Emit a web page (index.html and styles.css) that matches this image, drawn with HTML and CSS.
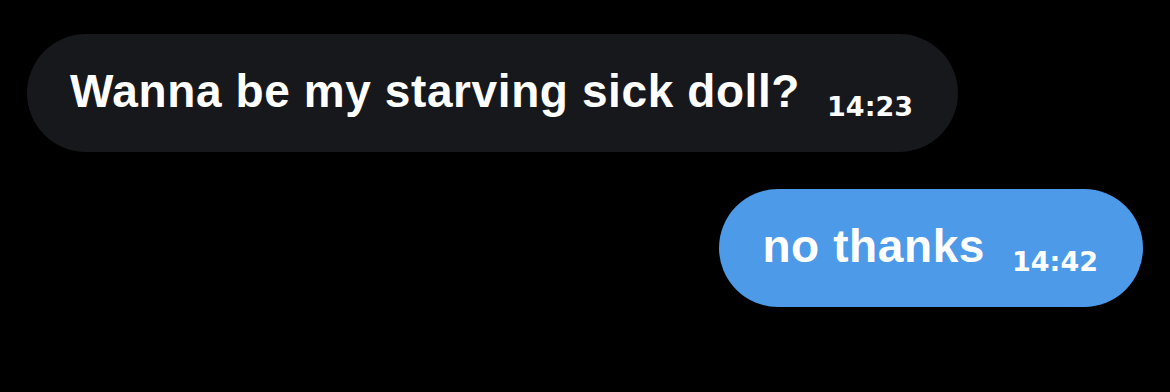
FILE: index.html
```html
<!DOCTYPE html>
<html lang="en">
<head>
    <meta charset="UTF-8">
    <meta name="viewport" content="width=device-width, initial-scale=1.0">
    <title>Messages</title>
    <link rel="stylesheet" href="styles.css">
</head>
<body>
    <div class="chat">
        <div class="row received">
            <div class="bubble"><span class="text">Wanna be my starving sick doll?</span><span class="time">14:23</span></div>
        </div>
        <div class="row sent">
            <div class="bubble"><span class="text">no thanks</span><span class="time">14:42</span></div>
        </div>
    </div>
</body>
</html>
```

FILE: styles.css
```css
body {
    margin: 0;
    background-color: #000;
    font-family: 'Liberation Sans', Arial, sans-serif;
    color: #fff;
}
.chat {
    display: flex;
    flex-direction: column;
    gap: 37px;
    padding: 34px 27px 0 27px;
}
.row {
    display: flex;
}
.sent {
    justify-content: flex-end;
}
.bubble {
    box-sizing: border-box;
    height: 118px;
    padding: 35px 45px 0 43px;
    border-radius: 59px;
    line-height: 44px;
    white-space: nowrap;
}
.received .bubble {
    background-color: #16181c;
}
.sent .bubble {
    background-color: #4c9ae8;
}
.text {
    font-size: 46px;
    font-weight: bold;
    letter-spacing: 0.6px;
}
.time {
    font-family: 'DejaVu Sans', sans-serif;
    font-size: 27px;
    font-weight: bold;
    line-height: 26px;
    vertical-align: -9px;
    margin-left: 27px;
}
```
